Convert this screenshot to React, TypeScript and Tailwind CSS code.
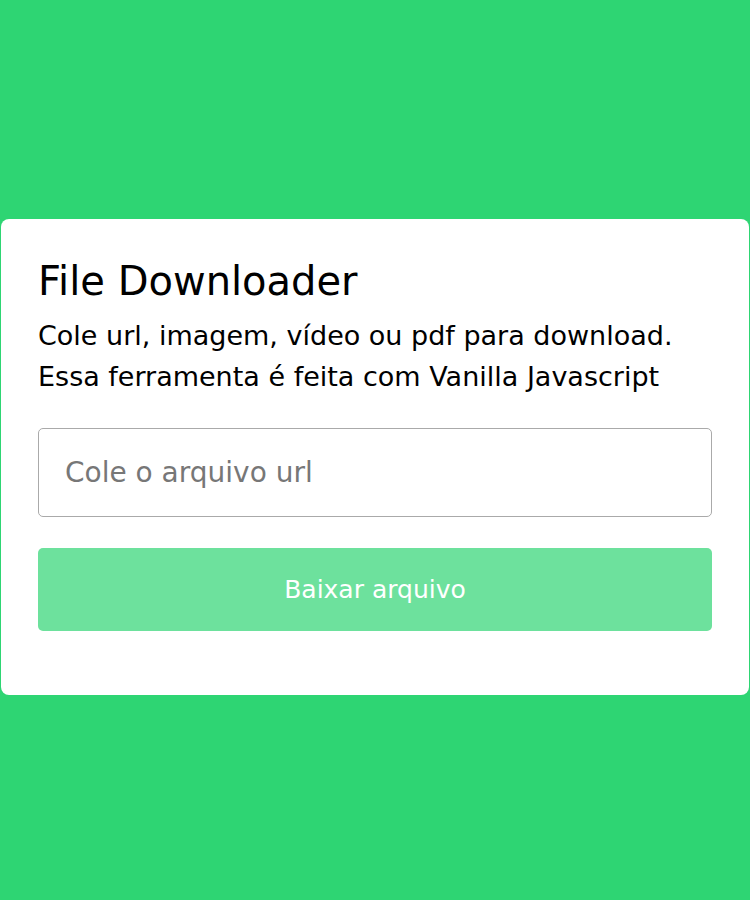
export default function App() {
  return (
    <div className="min-h-[900px] bg-[#2ed573] pt-[219px] font-['DejaVu_Sans',sans-serif]">
      <div className="mx-px w-[748px] rounded-lg bg-white px-[37px] pt-[38px] pb-[64px]">
        <h1 className="text-[40px] font-medium leading-[48px] text-black">File Downloader</h1>
        <p className="mt-[10px] text-[27px] leading-[41px] text-black">
          Cole url, imagem, vídeo ou pdf para download.
          <br />
          Essa ferramenta é feita com Vanilla Javascript
        </p>
        <input
          type="text"
          placeholder="Cole o arquivo url"
          className="mt-[31px] h-[89px] w-full rounded-[5px] border border-[#aaa] px-[26px] text-[28px] outline-none placeholder:text-[#777]"
        />
        <button className="mt-[31px] h-[83px] w-full rounded-[5px] bg-[#6de19d] text-[25px] text-white">
          Baixar arquivo
        </button>
      </div>
    </div>
  )
}
